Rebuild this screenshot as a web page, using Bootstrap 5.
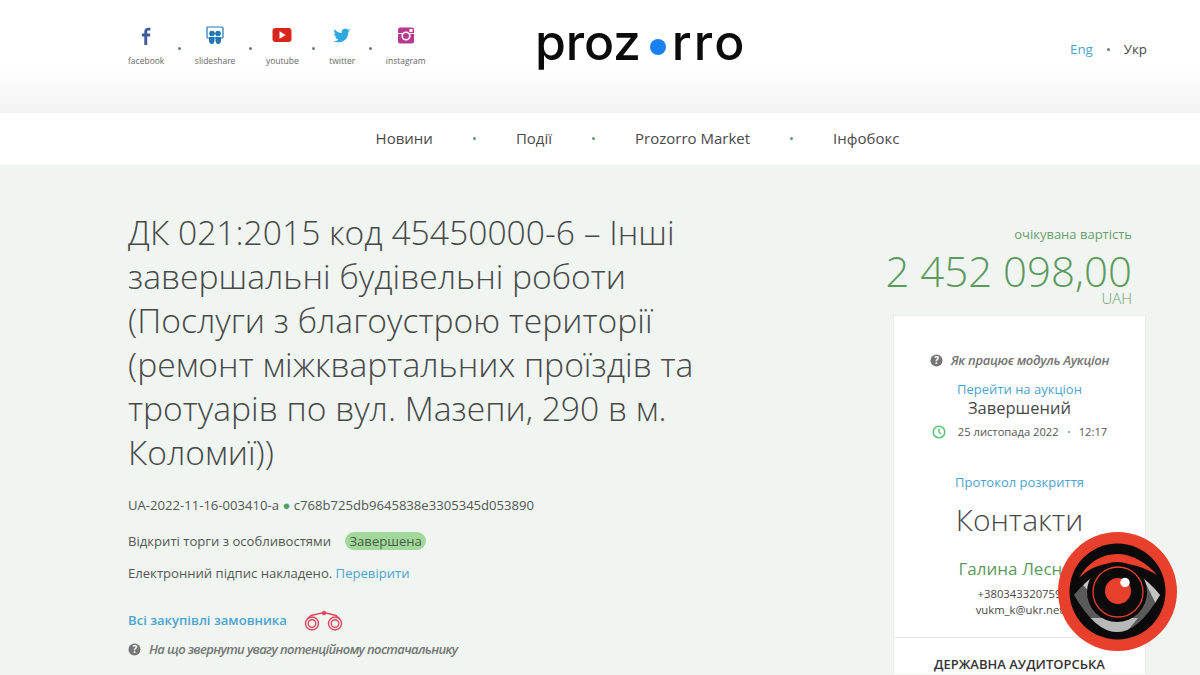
<!DOCTYPE html>
<html lang="uk"><head><meta charset="utf-8"><title>Prozorro</title>
<link rel="stylesheet" href="https://cdn.jsdelivr.net/npm/bootstrap@5.3.0/dist/css/bootstrap.min.css">
<style>
html,body{height:675px;overflow:hidden}
body{font-family:"Open Sans","Noto Sans",sans-serif;background:#f0f5f2;color:#484848;font-size:13.1px}
a{text-decoration:none;color:#4ea3cf}
.top-band{height:113px;background:linear-gradient(#fff 0,#fff 60%,#f3f3f3 100%)}
.wrap-main{width:1018px;margin-left:128px}
.social-item{font-size:8.5px;color:#666;line-height:12px}
.social-item svg{display:block;margin:0 auto 8px}
.sep-dot{width:3px;height:3px;border-radius:50%;background:#6d7d72;flex:none}
.social-row{padding-top:25px;gap:13.75px}
.social-row .sep-dot{margin-top:4px}
.brand-name{font-family:"Inter","Lato",sans-serif;font-weight:500;font-size:50px;line-height:60px;color:#0b0b0b;letter-spacing:-.2px}
.brand-dot{display:inline-block;width:16px;height:16px;border-radius:50%;background:#1a82f0;margin:0 6px 0 9px;vertical-align:5px}
.brand-tail{letter-spacing:2px}
.brand-box{position:absolute;left:535px;top:12px}
.lang-box{position:absolute;left:1070px;top:40px;font-size:13.3px;line-height:19px}
.main-nav{height:52px;background:#fff;font-size:15px;color:#4a4a4a;gap:40px;padding-left:75px;padding-bottom:1px}
.main-nav .sep-dot{background:#55a06a}
.page-title{font-weight:300;font-size:33.65px;line-height:44px;color:#484848;margin:0;width:590px}
.left-col{width:640px;padding-top:45px}
.right-col{width:253px}
.meta-line{font-size:13.1px;line-height:19px;color:#555}
.state-pill{background:#a3d89b;border-radius:10px;padding:0 4px;line-height:18px;display:inline-block;color:#4a5c48;margin-left:11px}
.green-dot{color:#55a06a}
.hint-line{font-size:13px;font-style:italic;font-weight:600;color:#757575;letter-spacing:-.3px}
.hint-wide{letter-spacing:-.63px}
.price-box{padding-right:14px}
.price-cap{font-size:13px;color:#6a9f6c;line-height:19px;padding-top:60px}
.price-big{font-weight:300;font-size:42px;line-height:44px;color:#5c9a5e;margin:5px 0 0 -20px}
.price-cur{font-weight:300;font-size:15px;line-height:10px;color:#6a9f6c}
.side-card{background:#fff;margin-top:12px;height:359px;border:1px solid #e9eeeb;border-bottom:0;text-align:center}
.side-link{line-height:19px;font-size:13px}
.auction-status{font-size:16.5px;line-height:24px;color:#484848}
.date-row{font-size:11.2px;margin-top:4px;color:#555}
.date-row .sep-dot{width:2px;height:2px;background:#55a06a}
.contacts-head{font-weight:300;font-size:30px;line-height:42px;color:#484848}
.person-name{font-size:17px;line-height:23px;color:#5c9a5e}
.small-contact{font-size:11.3px;line-height:16px;color:#484848}
.card-rule{border-top:1px solid #e6e6e6;margin-top:19px}
.audit-head{font-size:13px;font-weight:600;line-height:19px;color:#333;padding-top:17px}
.eye-badge{position:absolute;left:1058px;top:532px;width:119px;height:119px}
</style></head><body>
<header class="top-band position-relative">
  <div class="wrap-main social-row d-flex align-items-center">
    <div class="social-item text-center"><svg width="24" height="22" viewBox="0 0 24 22"><path fill="#3f5a99" d="M13.2 20V11.600h2.700l.4-3h-3.100V6.900c0-.9.3-1.400 1.500-1.400h1.700V2.800C16 2.700 15.200 2.700 14.300 2.700c-2.400 0-4 1.400-4 4v1.900H7.900v3h2.400V20z"/></svg>facebook</div>
    <span class="sep-dot"></span>
    <div class="social-item text-center"><svg width="24" height="22" viewBox="0 0 24 22"><rect x="4" y="2" width="16" height="11" rx="1" fill="none" stroke="#2077b5" stroke-width="1.200"/><circle cx="9" cy="8.500" r="2.800" fill="#2077b5"/><circle cx="15" cy="8.500" r="2.800" fill="#2077b5"/><path fill="#2077b5" d="M6 12h5.500v3.500c0 1.700-1 3.500-2.700 3.500S6 17.500 6 15.500zM12.500 12H18v3.500c0 2-1 3.500-2.800 3.500s-2.700-1.800-2.700-3.500z"/></svg>slideshare</div>
    <span class="sep-dot"></span>
    <div class="social-item text-center"><svg width="24" height="22" viewBox="0 0 24 22"><rect x="2.500" y="3" width="19" height="14" rx="3" fill="#d9261c"/><path fill="#fff" d="M9.500 6.300v7.400l6.200-3.700z"/></svg>youtube</div>
    <span class="sep-dot"></span>
    <div class="social-item text-center"><svg width="24" height="22" viewBox="0 0 24 22"><path fill="#2fa8e0" d="M20.500 5.300c-.6.300-1.300.5-2 .6.700-.4 1.300-1.100 1.500-1.900-.7.400-1.400.7-2.200.8a3.500 3.500 0 0 0-6 3.200C8.900 7.900 6.300 6.500 4.600 4.300c-.9 1.600-.4 3.600 1.100 4.600-.6 0-1.100-.2-1.600-.4 0 1.700 1.200 3.100 2.800 3.400-.5.100-1 .2-1.600.1.400 1.400 1.700 2.400 3.300 2.400-1.500 1.200-3.400 1.700-5.200 1.500 5 3.200 14.900 1.200 15-9.200.7-.5 1.300-1.100 1.700-1.800z"/></svg>twitter</div>
    <span class="sep-dot"></span>
    <div class="social-item text-center"><svg width="24" height="22" viewBox="0 0 24 22"><rect x="4" y="2.500" width="16" height="16" rx="2" fill="#b83a8e"/><circle cx="12" cy="11" r="3.800" fill="none" stroke="#fff" stroke-width="1.600"/><rect x="15.500" y="4" width="3" height="3" fill="#fff"/><path fill="none" stroke="#fff" stroke-width="1" d="M4 8.500h4.500M15.500 8.500H20"/></svg>instagram</div>
  </div>
  <div class="brand-box brand-name">proz<span class="brand-dot"></span><span class="brand-tail">rro</span></div>
  <div class="lang-box d-flex align-items-center"><a href="#">Eng</a><span class="sep-dot" style="margin:0 14px;"></span><span>Укр</span></div>
</header>
<nav class="main-nav d-flex align-items-center justify-content-center">
  <span>Новини</span><span class="sep-dot"></span><span>Події</span><span class="sep-dot"></span><span>Prozorro Market</span><span class="sep-dot"></span><span>Інфобокс</span>
</nav>
<main class="wrap-main d-flex justify-content-between">
  <div class="left-col">
    <h1 class="page-title">ДК 021:2015 код 45450000-6 – Інші завершальні будівельні роботи (Послуги з благоустрою території (ремонт міжквартальних проїздів та тротуарів по вул. Мазепи, 290 в м. Коломиї))</h1>
    <div class="meta-line" style="margin-top:22px;">UA-2022-11-16-003410-а <span class="green-dot">●</span> c768b725db9645838e3305345d053890</div>
    <div class="meta-line" style="margin-top:17px;">Відкриті торги з особливостями <span class="state-pill">Завершена</span></div>
    <div class="meta-line" style="margin-top:13px;">Електронний підпис накладено. <a href="#">Перевірити</a></div>
    <div class="d-flex align-items-center" style="margin-top:27px;"><a href="#" class="fw-semibold">Всі закупівлі замовника</a>
      <svg style="margin-left:17px;" width="40" height="22" viewBox="0 0 40 22" fill="none" stroke="#e0485f" stroke-width="1.400"><circle cx="8" cy="13.500" r="6.500"/><circle cx="8" cy="13.500" r="3.800"/><circle cx="31" cy="13.500" r="6.500"/><circle cx="31" cy="13.500" r="3.800"/><path d="M3 9l4-3.500 13-3 12 3 4 3.500"/><circle cx="20" cy="3" r="1.500" fill="#e0485f"/></svg>
    </div>
    <div class="hint-line hint-wide d-flex align-items-center" style="margin-top:8px;"><svg width="13" height="13" viewBox="0 0 13 13" class="me-2"><circle cx="6.500" cy="6.500" r="6" fill="#757575"/><text x="6.500" y="10" text-anchor="middle" font-size="10" font-weight="700" font-style="normal" fill="#fff" font-family="Open Sans">?</text></svg>На що звернути увагу потенційному постачальнику</div>
  </div>
  <div class="right-col">
    <div class="text-end price-box">
      <div class="price-cap">очікувана вартість</div>
      <div class="price-big text-nowrap">2 452 098,00</div>
      <div class="price-cur">UAH</div>
    </div>
    <div class="side-card">
      <div class="hint-line d-flex align-items-center justify-content-center" style="padding-top:35px;"><svg width="13" height="13" viewBox="0 0 13 13" class="me-2"><circle cx="6.500" cy="6.500" r="6" fill="#757575"/><text x="6.500" y="10" text-anchor="middle" font-size="10" font-weight="700" font-style="normal" fill="#fff" font-family="Open Sans">?</text></svg>Як працює модуль Аукціон</div>
      <div class="side-link" style="margin-top:9px;"><a href="#">Перейти на аукціон</a></div>
      <div class="auction-status" style="margin-top:-3px;">Завершений</div>
      <div class="d-flex align-items-center justify-content-center date-row"><svg width="14" height="14" viewBox="0 0 14 14" fill="none" stroke="#5cc47a" stroke-width="1.500" class="me-2"><circle cx="7" cy="7" r="5.800"/><path d="M7 3.500V7l2.200 2"/></svg><span class="ms-1">25 листопада 2022</span><span class="sep-dot" style="margin:0 9px;"></span><span>12:17</span></div>
      <div class="side-link" style="margin-top:33px;"><a href="#">Протокол розкриття</a></div>
      <div class="contacts-head" style="margin-top:7px;">Контакти</div>
      <div class="person-name" style="margin-top:16px;">Галина Лесняк</div>
      <div class="small-contact" style="margin-top:6px;">+380343320759</div>
      <div class="small-contact">vukm_k@ukr.net</div>
      <div class="card-rule"></div>
      <div class="audit-head">ДЕРЖАВНА АУДИТОРСЬКА</div>
    </div>
  </div>
</main>
<svg class="eye-badge" viewBox="0 0 119 119">
  <defs><clipPath id="almond"><path d="M16 63Q59 10 102 63Q59 137 16 63z"/></clipPath></defs>
  <circle cx="59.500" cy="59.500" r="59.500" fill="#e8402c"/>
  <circle cx="59.500" cy="59.500" r="48" fill="#0a0a0a"/>
  <path fill="#e8402c" d="M21 46C30 30 44 22 59 22S88 30 99 43C86 35 72 31 59 31 44 31 31 36 21 46z"/>
  <g clip-path="url(#almond)">
    <rect x="10" y="30" width="100" height="80" fill="#5a5a5a"/>
    <path fill="#b8b8b8" d="M30 86H80L67 102H29z"/>
    <path fill="#c4c4c4" d="M25 53 37 41 41 70z"/>
    <path fill="#c4c4c4" d="M82 40 104 60 99 74z"/>
  </g>
  <circle cx="59" cy="60" r="30" fill="#0a0a0a"/>
  <circle cx="60" cy="60" r="25" fill="none" stroke="#e8402c" stroke-width="1.300"/>
  <circle cx="60" cy="59" r="13" fill="#e8402c"/>
  <circle cx="67" cy="50.500" r="4.700" fill="#fff"/>
</svg>
</body></html>
